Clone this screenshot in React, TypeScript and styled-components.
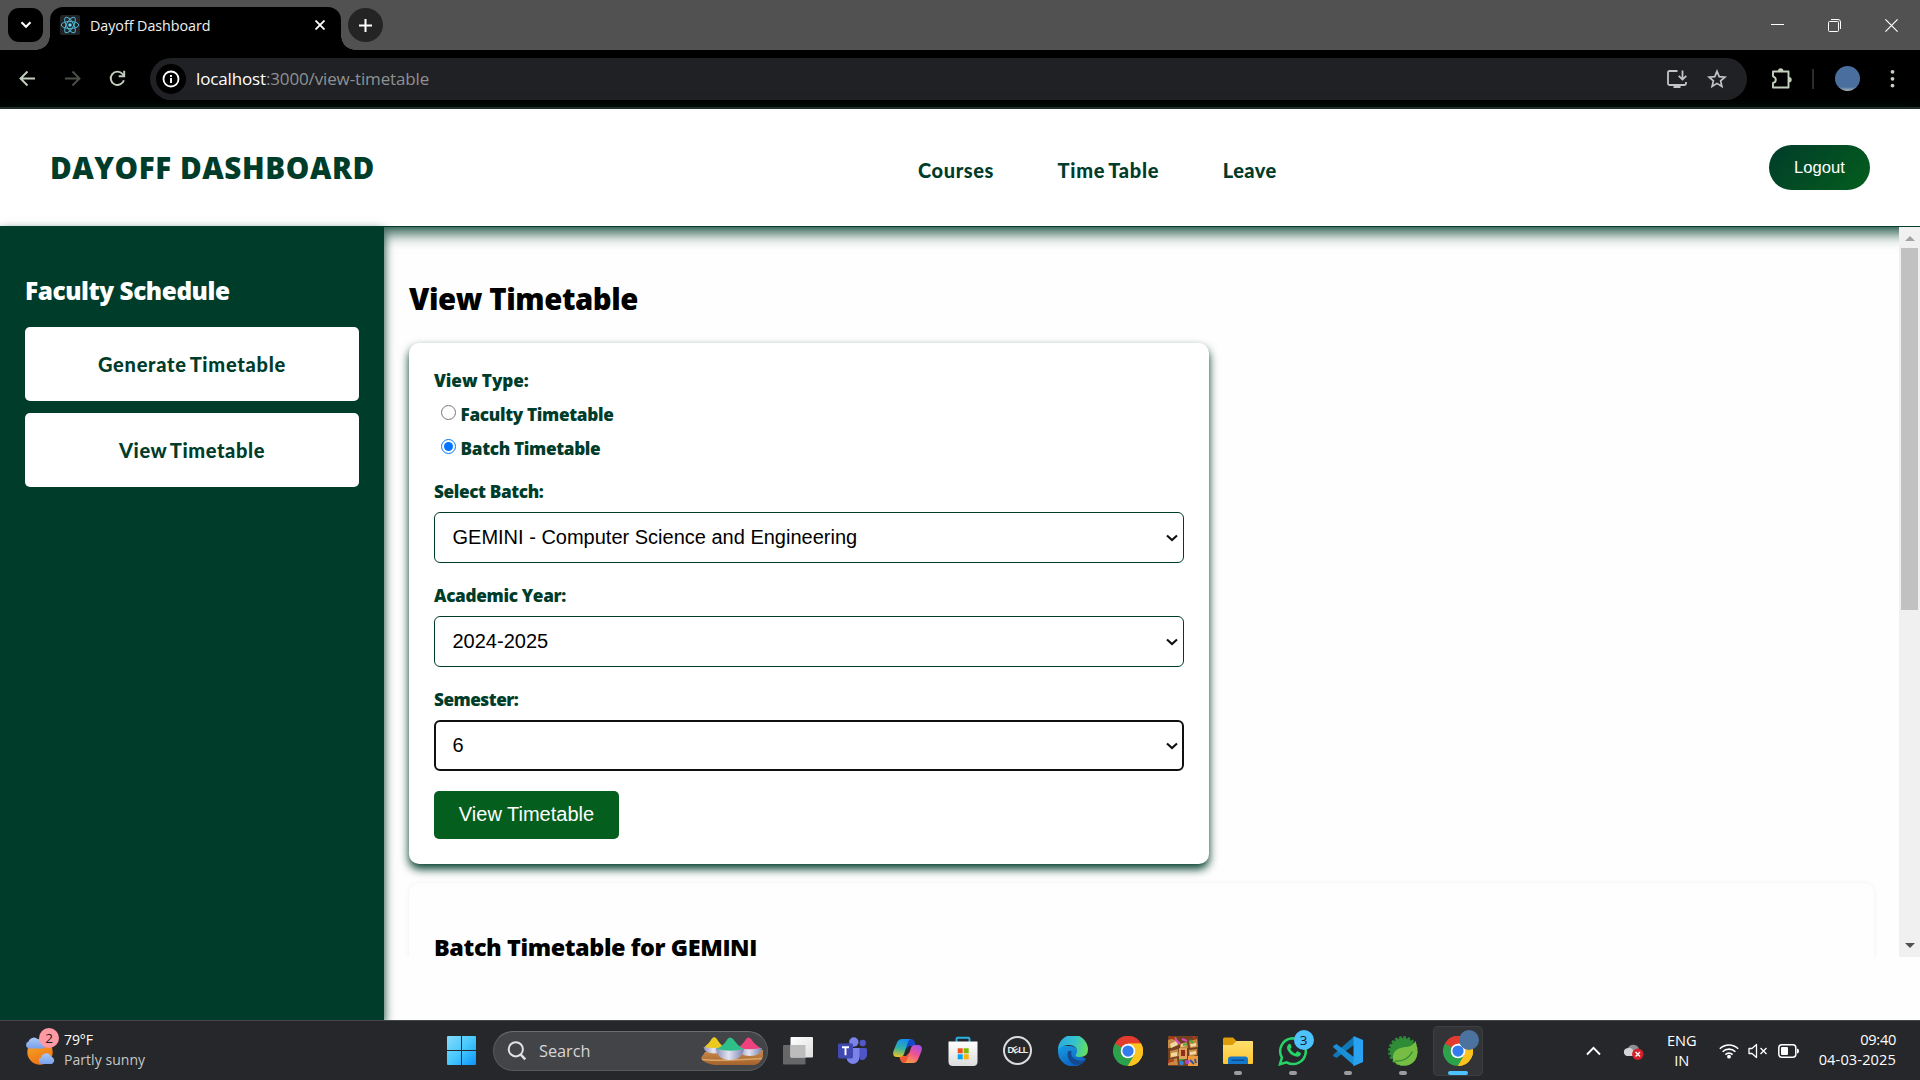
import React from 'react';
import styled, { createGlobalStyle } from 'styled-components';

const ui = '"Open Sans", "Noto Sans", sans-serif';
const arial = '"Liberation Sans", Arial, sans-serif';
const gill = 'Lato, sans-serif';
const green = '#003c2a';

const Global = createGlobalStyle`
  * { box-sizing: border-box; }
  body { margin: 0; background: #fefefe; overflow: hidden; }
  button { border: 0; padding: 0; margin: 0; background: none; }
  h1, h2, h3, p { margin: 0; }
  svg { display: block; flex: none; }
`;

const Screen = styled.div`
  width: 1920px; height: 1080px; display: flex; flex-direction: column;
  overflow: hidden; font-family: ${ui};
`;

/* ---------- browser chrome ---------- */
const TabStrip = styled.div`
  height: 50px; flex: none; background: #515151; display: flex; align-items: flex-start; padding-left: 8px;
`;
const TabMenu = styled.button`
  width: 35px; height: 34px; margin-top: 8px; border-radius: 11px; background: #000;
  display: flex; align-items: center; justify-content: center;
`;
const Tab = styled.div`
  position: relative; width: 291px; height: 43px; margin: 7px 7px 0 7px; padding: 0 16px 0 10px;
  border-radius: 13px 13px 0 0; background: #000; display: flex; align-items: center;
  &::before, &::after {
    content: ''; position: absolute; bottom: 0; width: 14px; height: 14px;
  }
  &::before { left: -14px; background: radial-gradient(circle at 0 0, transparent 13.5px, #000 14px); }
  &::after { right: -14px; background: radial-gradient(circle at 100% 0, transparent 13.5px, #000 14px); }
`;
const Favicon = styled.span`
  width: 20px; height: 20px; margin: -7px 10px 0 0; background: #222327; border-radius: 2px;
`;
const TabTitle = styled.span`
  flex: 1; margin-top: -6px; font-size: 14.3px; line-height: 20px; letter-spacing: -0.05px; color: #f0f0f0; white-space: nowrap;
`;
const TabClose = styled.span`margin-top: -7px;`;
const NewTab = styled.button`
  width: 35px; height: 34px; margin-top: 8px; border-radius: 50%; background: #242424;
  display: flex; align-items: center; justify-content: center;
`;
const WindowControls = styled.div`margin-left: auto; height: 50px; display: flex; align-items: center;`;
const WindowButton = styled.button<{ $last?: boolean }>`
  width: ${p => (p.$last ? 57 : 57)}px; height: 50px; display: flex; align-items: center; justify-content: center;
`;
const Toolbar = styled.div`
  height: 59px; flex: none; background: #000; border-bottom: 2px solid #2a2a2c;
  display: flex; align-items: center; padding: 0 10px 0 17px;
`;
const NavIcon = styled.button<{ $gap?: number }>`
  width: 21px; height: 21px; margin-right: ${p => p.$gap ?? 24}px;
`;
const Omnibox = styled.div`
  flex: none; width: 1597px; height: 42px; border-radius: 21px; background: #202124; padding: 0 19px 0 6px;
  margin-right: 24px; display: flex; align-items: center;
`;
const SiteInfo = styled.span`
  width: 30px; height: 30px; border-radius: 50%; background: #000; margin-right: 10px;
  display: flex; align-items: center; justify-content: center;
`;
const Url = styled.span`
  flex: 1; padding-top: 1px; font-size: 17px; line-height: 24px; letter-spacing: -0.14px; color: #8f9194;
  b { font-weight: 400; color: #fff; }
`;
const OmniIcons = styled.span`display: flex; gap: 18px;`;
const Divider = styled.span`width: 2px; height: 20px; background: #2c2c2c; margin: 0 21px 0 20px;`;
const Avatar = styled.span`
  width: 25px; height: 25px; border-radius: 50%; margin-right: 19px;
  background: linear-gradient(#4a6f9f 84%, #a6aeb4 98%);
`;

/* ---------- page ---------- */
const Header = styled.header`
  position: relative; z-index: 2; height: 118px; flex: none; background: #fff;
  border-bottom: 1px solid ${green}; box-shadow: 0 5px 15px ${green};
  display: flex; align-items: center; padding: 0 50px 0 50px;
`;
const Brand = styled.h1`
  width: 868px; font-weight: 800; font-size: 29.6px; line-height: 40px; letter-spacing: 0.57px; color: ${green};
  padding-top: 1px;
`;
const Nav = styled.nav`flex: 1; display: flex; gap: 63.5px; padding-top: 4px;`;
const NavLink = styled.a<{ $ls?: number }>`
  font: 900 20px/26px ${gill}; letter-spacing: ${p => p.$ls ?? 0.6}px; word-spacing: -2px;
  color: ${green}; white-space: nowrap;
`;
const Logout = styled.button`
  width: 101px; height: 45px; border-radius: 23px; color: #fff; font: 16.6px/19px ${arial};
  background: linear-gradient(135deg, ${green}, #045e1d);
`;
const Body = styled.div`flex: 1; min-height: 0; margin-top: -1px; display: flex;`;
const Sidebar = styled.aside`
  position: relative; z-index: 3; width: 384px; background: ${green}; box-shadow: 0 5px 10px ${green};
  padding: 47px 25px 0; display: flex; flex-direction: column;
`;
const SideTitle = styled.h2`
  font-weight: 800; font-size: 24.4px; line-height: 36px; letter-spacing: -0.45px; color: #fff; margin-bottom: 18px;
`;
const SideLink = styled.a<{ $ls: number }>`
  height: 74px; margin-bottom: 12px; border-radius: 5px; background: #fff; color: ${green};
  font: 900 20px/26px ${gill}; letter-spacing: ${p => p.$ls}px; word-spacing: -2px;
  display: flex; align-items: center; justify-content: center; padding-bottom: 1px;
`;
const Scroller = styled.div`
  flex: 1; height: 730px; margin-top: 1px; display: flex; background: #fefefe;
`;
const Main = styled.main`flex: 1; overflow: hidden; padding: 50px 25px 0;`;
const PageTitle = styled.h2`
  font-weight: 800; font-size: 29.3px; line-height: 44px; letter-spacing: -0.4px; color: #000; margin-bottom: 22px;
`;
const FormCard = styled.form`
  width: 800px; height: 521px; padding: 25px; border-radius: 10px; background: #fff;
  box-shadow: 0 5px 10px ${green}; display: flex; flex-direction: column; align-items: flex-start;
`;
const Label = styled.label<{ $ls?: number }>`
  font-weight: 800; font-size: 17.2px; line-height: 25px; letter-spacing: ${p => p.$ls ?? -0.4}px; color: ${green};
`;
const RadioGroup = styled.div`padding: 5px 0 13px 6.5px;`;
const RadioRow = styled.div`
  height: 34px; display: flex; align-items: center; gap: 5px;
  ${Label} { margin-top: -2px; }
`;
const Radio = styled.input`width: 15px; height: 15px; margin: -5px 0 0 0;`;
const SelectBox = styled.div<{ $focus?: boolean }>`
  width: 750px; height: 51px; margin: 8px 0 20px; border-radius: 6px; background: #fff; color: #000;
  border: ${p => (p.$focus ? '2px solid #101010' : `1px solid ${green}`)};
  padding: ${p => (p.$focus ? '0 4px 0 16.5px' : '0 5px 0 17.5px')};
  font: 20px/24px ${arial};
  display: flex; align-items: center; justify-content: space-between;
`;
const SelectText = styled.span`margin-top: -1px;`;
const Submit = styled.button`
  width: 185px; height: 48px; border-radius: 5px; background: #045e1d; color: #fff; font: 20px/24px ${arial};
  padding-bottom: 2px;
`;
const ResultCard = styled.section`
  height: 300px; margin-top: 19px; padding: 49px 25px; border-radius: 10px; background: #fefefe;
  box-shadow: 0 0 5px rgba(0, 0, 0, 0.06);
`;
const ResultTitle = styled.h3`
  font-weight: 800; font-size: 23.4px; line-height: 30px; letter-spacing: -0.4px; color: #000;
`;
const Scrollbar = styled.div`
  position: relative; z-index: 3; width: 21px; background: #f0f0f0; padding: 9px 2px;
  display: flex; flex-direction: column; align-items: center;
`;
const Thumb = styled.span`width: 17px; height: 362px; margin: 7px 0 auto; background: #c1c1c1;`;
const ScrollArrow = styled.i<{ $down?: boolean }>`
  width: 0; height: 0; border: 5px solid transparent;
  ${p => (p.$down ? 'border-top-color: #505050; border-bottom: 0;' : 'border-bottom-color: #a3a3a3; border-top: 0;')}
`;

/* ---------- taskbar ---------- */
const Taskbar = styled.footer`
  position: relative; z-index: 5; height: 60px; flex: none; background: #25272b; border-top: 1px solid #45484a;
  display: flex; align-items: center; color: #fff;
`;
const Weather = styled.div`
  position: relative; width: 447px; height: 59px; padding: 0 0 0 24px; display: flex; align-items: center; gap: 8px;
`;
const WeatherBadge = styled.span`
  position: absolute; left: 39px; top: 7px; width: 20px; height: 20px; border-radius: 50%; background: #ff99a4;
  color: #1b1b1b; font-size: 13.5px; line-height: 20px; text-align: center;
`;
const WeatherText = styled.div`
  font-size: 14px; line-height: 20px; letter-spacing: -0.1px; padding-bottom: 1px;
  p + p { color: #c5c6c8; letter-spacing: 0.05px; }
`;
const Search = styled.div`
  width: 275px; height: 40px; margin: 0 2px 0 17px; padding: 0 3px 0 13px; border-radius: 20px;
  background: #434447; border: 1px solid #58595c; border-top-color: #6c6d70;
  display: flex; align-items: center;
`;
const SearchText = styled.span`flex: 1; margin: 0 0 0 12px; font-size: 16.3px; line-height: 22px; color: #d6d6d7;`;
const AppSlot = styled.div<{ $active?: boolean }>`
  position: relative; width: 50px; height: 50px; margin: 0 2.5px; border-radius: 5px;
  display: flex; align-items: center; justify-content: center;
  ${p => p.$active && 'background: #323438; box-shadow: inset 0 0 0 1px #3d3f43;'}
`;
const Running = styled.i<{ $active?: boolean }>`
  position: absolute; bottom: 1px; left: 50%; transform: translateX(-50%); height: 4px; border-radius: 2px;
  width: ${p => (p.$active ? 20 : 8)}px; background: ${p => (p.$active ? '#4cc2ff' : '#9b9c9e')};
`;
const CountBadge = styled.span`
  position: absolute; left: 26px; top: 4px; width: 20px; height: 20px; border-radius: 50%; background: #4cc2ff;
  color: #1b1b1b; font-size: 13.5px; line-height: 20px; text-align: center;
`;
const ProfileBadge = styled.span`
  position: absolute; right: 4px; top: 4px; width: 20px; height: 20px; border-radius: 50%; background: #4c729f;
`;
const Tray = styled.div`
  margin-left: auto; padding-right: 24px; height: 59px; display: flex; align-items: center;
`;
const TrayIcon = styled.span<{ $right: number }>`margin-right: ${p => p.$right}px;`;
const TrayText = styled.div<{ $right?: number; $end?: boolean }>`
  font-size: 14.6px; line-height: 20px; padding-bottom: ${p => (p.$end ? 4 : 2)}px;
  letter-spacing: ${p => (p.$end ? 0.12 : 0)}px; margin-right: ${p => p.$right ?? 0}px;
  text-align: ${p => (p.$end ? 'right' : 'center')}; white-space: nowrap;
`;
const Clock = styled.span`letter-spacing: -0.3px;`;

const stroke = (color: string, w: number) => ({ fill: 'none', stroke: color, strokeWidth: w });

const SelectArrow = () => (
  <svg width="12" height="8" viewBox="0 0 12 8"><path d="M1 1.4 6 6l5-4.6" {...stroke('#101010', 2.1)} /></svg>
);

const ReactLogo = () => (
  <svg width="20" height="20" viewBox="0 0 20 20">
    <g {...stroke('#4fb6cf', 1)}>
      {[0, 60, 120].map(a => <ellipse key={a} cx="10" cy="10" rx="8.8" ry="3.5" transform={`rotate(${a} 10 10)`} />)}
    </g>
    <circle cx="10" cy="10" r="1.7" fill="#61dafb" />
  </svg>
);

const ChromeLogo = () => (
  <svg width="30" height="30" viewBox="0 0 48 48">
    <path d="M24 24 3.2 12A24 24 0 0 1 44.8 12Z" fill="#e33b2e" />
    <path d="M24 24 44.8 12A24 24 0 0 1 24 48Z" fill="#fcc31e" />
    <path d="M24 24 24 48A24 24 0 0 1 3.2 12Z" fill="#2ba24c" />
    <path d="M24 12H44.8L34.4 30Z" fill="#fcc31e" />
    <path d="M34.4 30 24 48 13.6 30Z" fill="#2ba24c" />
    <path d="M13.6 30 3.2 12 24 12Z" fill="#e33b2e" />
    <path d="M3.2 12 13.6 30 24 24Z" fill="#2ba24c" />
    <path d="M3.2 12 H44.8 A24 24 0 0 0 3.2 12Z" fill="#e33b2e" />
    <path d="M34.4 30 24 48A24 24 0 0 0 44.8 12H24Z" fill="#fcc31e" />
    <circle cx="24" cy="24" r="11.6" fill="#fff" />
    <circle cx="24" cy="24" r="9" fill="#327cf0" />
  </svg>
);

const WindowsLogo = () => (
  <svg width="29" height="29" viewBox="0 0 29 29">
    <defs>
      <linearGradient id="win" gradientUnits="userSpaceOnUse" x1="0" y1="0" x2="29" y2="29">
        <stop offset="0" stopColor="#85dcfb" /><stop offset=".5" stopColor="#47c8fc" /><stop offset="1" stopColor="#0c93fb" />
      </linearGradient>
    </defs>
    <path d="M0 1q0-1 1-1h13v14H0zM15 0h13q1 0 1 1v13H15zM0 15h14v14H1q-1 0-1-1zM15 15h14v13q0 1-1 1H15z" fill="url(#win)" />
  </svg>
);

const WeatherIcon = () => (
  <svg width="32" height="36" viewBox="0 0 32 36">
    <defs>
      <linearGradient id="sun" x1="0" y1="0" x2=".4" y2="1"><stop offset="0" stopColor="#f6b02c" /><stop offset="1" stopColor="#f07413" /></linearGradient>
      <linearGradient id="cl" x1="0" y1="0" x2="0" y2="1"><stop offset="0" stopColor="#a9c8f8" /><stop offset="1" stopColor="#7ba0ea" /></linearGradient>
    </defs>
    <circle cx="16" cy="19" r="12.7" fill="url(#sun)" />
    <path d="M4.500 15.500a3.700 3.700 0 0 1 0-7 6 6 0 0 1 10-2 5 5 0 0 1 5 9z" fill="url(#cl)" />
    <path d="M17 31a3.400 3.400 0 0 1 0-6.500 5.300 5.300 0 0 1 10-1 4 4 0 0 1 1 7.500z" fill="url(#cl)" />
  </svg>
);

const Bowls = () => (
  <svg width="64" height="30" viewBox="0 0 64 30">
    <defs>
      <linearGradient id="bowl"><stop offset="0" stopColor="#8d91b8" /><stop offset=".45" stopColor="#e3e4f2" /><stop offset="1" stopColor="#7e82ad" /></linearGradient>
      <linearGradient id="wood" x1="0" y1="0" x2="0" y2="1"><stop offset="0" stopColor="#c98a4c" /><stop offset="1" stopColor="#a3632b" /></linearGradient>
    </defs>
    <path d="M5 16 63 14v7q-3 7-9 8H14Q3 27 1 22z" fill="url(#wood)" />
    <path d="M2 23.5q14 2 60-1" {...stroke('#dba569', 1.4)} />
    <path d="M3.500 11h22q-1 6.500-11 6.500T3.500 11" fill="url(#bowl)" />
    <path d="M4.500 11q5-4 7.500-8.500 2-2.500 4.500 0Q19 7 23.500 11q-9 2-19 0" fill="#edc91d" />
    <path d="M38 12h24q-1 8-12 8t-12-8" fill="url(#bowl)" />
    <path d="M38 12q6-5 8-9 2.500-3 5 0 4 6 9.500 9-11 2.500-22.500 0" fill="#f0417f" />
    <path d="M16 12h28q-1 12-14 12T16 12" fill="url(#bowl)" />
    <path d="M16.500 13q8-4 11-10 2.500-3 5.500 0 4 6 10.500 10-13 3.500-27 0" fill="#2fc08a" />
  </svg>
);

const TaskView = () => (
  <svg width="30" height="28" viewBox="0 0 30 28">
    <defs><linearGradient id="tv" x1="0" y1="0" x2="1" y2="1"><stop offset="0" stopColor="#fff" /><stop offset="1" stopColor="#dedede" /></linearGradient></defs>
    <rect x="0" y="8" width="22.500" height="19.500" rx="1" fill="#666769" />
    <rect x="7.500" y="0" width="22.500" height="20.500" rx="1" fill="url(#tv)" />
    <path d="M7.500 8h15v12.500h-14q-1 0-1-1z" fill="#bcbcbc" />
  </svg>
);

const Teams = () => (
  <svg width="30" height="28" viewBox="0 0 30 28">
    <circle cx="24.700" cy="6" r="3.200" fill="#5159c9" />
    <path d="M20 11h7.500q1.500 0 1.500 1.500V18a5 5 0 0 1-7 4.600z" fill="#4e55c4" />
    <circle cx="15.800" cy="5" r="4.700" fill="#7b83eb" />
    <path d="M9 11h12.500v9a6.500 7 0 0 1-13 0z" fill="#7b83eb" />
    <rect x="0" y="6.500" width="15" height="15" rx="1.400" fill="#4048b1" />
    <path d="M4 10.200h7M7.500 10.200v8" {...stroke('#fff', 1.900)} />
  </svg>
);

const Copilot = () => (
  <svg width="29" height="26" viewBox="0 0 29 26">
    <defs>
      <linearGradient id="cpa" x1=".4" y1="0" x2=".2" y2="1"><stop offset="0" stopColor="#1690ee" /><stop offset=".5" stopColor="#31b1a2" /><stop offset="1" stopColor="#f0c61e" /></linearGradient>
      <linearGradient id="cpb" x1=".8" y1="0" x2=".3" y2="1"><stop offset="0" stopColor="#a34fea" /><stop offset=".5" stopColor="#ef5392" /><stop offset="1" stopColor="#fb9a45" /></linearGradient>
    </defs>
    <path d="M14 1h4q3 0 4 4l1 3h-7l-4 4z" fill="#1649c9" />
    <path d="M15 25h-4q-3 0-4-4l-1-3h7l4-4z" fill="#ee5a35" />
    <path d="M9 1h9q-2 0-3 3l-4 12q-1 3-4 3H4q-5 0-3.500-6L4 4.500Q5.500 1 9 1z" fill="url(#cpa)" />
    <path d="M20 25h-9q2 0 3-3l4-12q1-3 4-3h3q5 0 3.500 6L25 21.500q-1.500 3.500-5 3.500z" fill="url(#cpb)" />
  </svg>
);

const Store = () => (
  <svg width="30" height="30" viewBox="0 0 30 30">
    <defs><linearGradient id="st" x1="0" y1="0" x2="0" y2="1"><stop offset="0" stopColor="#fff" /><stop offset="1" stopColor="#dcdcdc" /></linearGradient></defs>
    <path d="M8.500 6.500V3q0-1.200 1.200-1.200h10.600q1.200 0 1.200 1.200v3.500" {...stroke('#2bb2e8', 1.900)} />
    <path d="M.5 5.500h29v20q0 4.500-4.500 4.500H5Q.5 30 .5 25.500z" fill="url(#st)" />
    <path d="M9.700 12.300h5v5h-5z" fill="#f1511b" /><path d="M15.700 12.300h5v5h-5z" fill="#80b900" />
    <path d="M9.700 18.300h5v5h-5z" fill="#00a3ee" /><path d="M15.700 18.300h5v5h-5z" fill="#fbb00a" />
  </svg>
);

const DellMark = styled.span`
  width: 29px; height: 29px; border: 2px solid #dcdcdc; border-radius: 50%; color: #ececec;
  font: 700 9px/25px ${arial}; letter-spacing: -0.9px; text-align: center; white-space: nowrap; margin-top: -1px;
  i { display: inline-block; font-style: normal; transform: rotate(-28deg); }
`;

const Edge = () => (
  <svg width="30" height="30" viewBox="0 0 30 30">
    <defs>
      <linearGradient id="ea" x1="0" y1=".2" x2="1" y2=".4"><stop offset="0" stopColor="#2aa9e0" /><stop offset=".55" stopColor="#34c3cf" /><stop offset="1" stopColor="#62dd63" /></linearGradient>
      <linearGradient id="eb" x1="0" y1="0" x2=".5" y2="1"><stop offset="0" stopColor="#1a9de4" /><stop offset="1" stopColor="#0c63c0" /></linearGradient>
    </defs>
    <path d="M0 15C0 7 6 10 12 10q8 0 8 8 4 3 8 5A15 15 0 0 1 0 15z" fill="url(#eb)" />
    <path d="M9.500 17q0 8 6 11.500 8 2 12.700-5-7 3.500-13-1.500-3-3-1.500-7-4-1-4.200 2z" fill="#15498f" />
    <path d="M0 14A15 15 0 0 1 30 13.500q0 7.500-8 7.500-4.500 0-4.500-2 1.500-1.500 1.500-3.500 0-6.500-8-6.500Q3 9 0 14z" fill="url(#ea)" />
  </svg>
);

const GameTile = () => (
  <svg width="30" height="30" viewBox="0 0 30 30">
    <rect width="30" height="30" fill="#71401f" />
    <path d="M0 4 8 1l3 7-8 4-3 0zM12 8l7-2 1 6-8 1zM21 5l8-2 1 8-8 1zM2 15l8-2 1 7-9 2zM21 14l8-1v6l-8 2zM1 24l8-2 1 7H0z" fill="#c68a45" />
    <path d="M2 8l6-3 2 4-7 3zM13 8l5-1v3l-5 1zM22 8l6-1v3l-5 1zM3 17l6-1v4l-6 1zM22 16l6-1v3l-6 1z" fill="#f0d69f" />
    <path d="M7 3l5 5M14 3l5 2" {...stroke('#d84ac4', 2.2)} />
    <path d="M15 9l4-1M22 4l3 3M11 24l7-2" {...stroke('#4aa63c', 2)} />
    <path d="M11 12h8v11h-8z" fill="#e2a15a" /><path d="M13 14h4v6h-4z" fill="#8d2e1c" />
    <path d="M20 20h10v10H20z" fill="#ef9a3a" /><circle cx="13.500" cy="27" r="2.300" fill="#3487d8" />
    <circle cx="19" cy="26" r="2.200" fill="#a844cf" /><path d="M22 24l4 4M27 23l1 4" {...stroke('#2d54a6', 1.800)} />
    <path d="M1 1l6 2M24 0l4 3M0 26l6-2" {...stroke('#b6351f', 2)} />
  </svg>
);

const Folder = () => (
  <svg width="30" height="28" viewBox="0 0 30 28">
    <defs><linearGradient id="fo" x1="0" y1="0" x2="0" y2="1"><stop offset="0" stopColor="#ffdf70" /><stop offset="1" stopColor="#fdc52f" /></linearGradient></defs>
    <path d="M0 2q0-1.500 1.500-1.500H10L13.500 4H28q2 0 2 2v4H0z" fill="#dd9c09" />
    <path d="M0 8h9.500L13.500 4H29q1 0 1 1v21q0 1-1 1H1q-1 0-1-1z" fill="url(#fo)" />
    <path d="M5 27v-4.500q0-3 3-3h14q3 0 3 3V27z" fill="#1577c9" /><path d="M8.500 23.200h13" {...stroke('#0b4c91', 1.400)} />
  </svg>
);

const WhatsApp = () => (
  <svg width="30" height="30" viewBox="0 0 30 30">
    <path d="M2 28.200l1.900-6.600A12.800 12.800 0 1 1 8.600 26.300z" {...stroke('#27d366', 2.500)} />
    <path d="M10.600 8.200c.9-.9 1.700-.5 2 .3l.9 2.100c.2.600-.1 1.200-1.200 2.400 1.300 2.300 3 3.700 5 4.500l1.500-1.800c.4-.5.900-.4 1.400-.2l2.300 1.200c.7.500.3 2-.6 3-1.500 1.500-4.100 1.300-6.800-.1-3.300-1.800-5.400-4.900-5.900-6.700-.5-1.900.3-3.700 1.400-4.700z" fill="#27d366" />
  </svg>
);

const VSCode = () => (
  <svg width="30" height="30" viewBox="0 0 30 30">
    <path d="M21.500 0v8.500L3.500 22 .5 20.200q-.8-.9 0-1.800z" fill="#1178b8" />
    <path d="M21.500 30v-8.500L3.500 8 .5 9.800q-.8.900 0 1.800z" fill="#1a8fd8" />
    <path d="M21 .3 30 4v22l-9 4q-1-.2-.5-1.500V1.500Q20.400.5 21 .3z" fill="#29a3f1" />
  </svg>
);

const SpringIcon = () => (
  <svg width="30" height="30" viewBox="0 0 30 30">
    <circle cx="15" cy="15" r="13.600" {...stroke('#2f8c36', 2.600)} strokeDasharray="2.700 1.570" />
    <circle cx="15" cy="15" r="13" fill="#2f8c36" />
    <path d="M27.500 5q6 19-6.500 24-10 2.500-15.500-4-2.500-9 5.500-12.500 4-1.500 9-1.800 4.500-.700 7.500-5.700z" fill="#76bd43" />
    <path d="M7 25q12 1 17.500-9.500" {...stroke('#2f8c36', 1.300)} />
  </svg>
);

const SearchGlass = () => (
  <svg width="20" height="20" viewBox="0 0 20 20">
    <circle cx="8.800" cy="8.300" r="7.100" {...stroke('#e2e2e2', 2)} /><path d="M13.500 13.300 18.300 18.300" {...stroke('#e2e2e2', 2.400)} />
  </svg>
);

const taskApps: { icon: React.ReactNode; run?: boolean; active?: boolean; badge?: React.ReactNode }[] = [
  { icon: <TaskView /> },
  { icon: <Teams /> },
  { icon: <Copilot /> },
  { icon: <Store /> },
  { icon: <DellMark>D<i>E</i>LL</DellMark> },
  { icon: <Edge /> },
  { icon: <ChromeLogo /> },
  { icon: <GameTile /> },
  { icon: <Folder />, run: true },
  { icon: <WhatsApp />, run: true, badge: <CountBadge>3</CountBadge> },
  { icon: <VSCode />, run: true },
  { icon: <SpringIcon />, run: true },
  { icon: <ChromeLogo />, run: true, active: true, badge: <ProfileBadge /> },
];

const fields = [
  { label: 'Select Batch:', ls: -0.38, value: 'GEMINI - Computer Science and Engineering' },
  { label: 'Academic Year:', ls: -0.32, value: '2024-2025' },
  { label: 'Semester:', ls: -0.5, value: '6', focus: true },
];

export default function App() {
  return (
    <Screen>
      <Global />
      <TabStrip>
        <TabMenu>
          <svg width="12" height="8" viewBox="0 0 12 8"><path d="M1.500 1.200 6 5.700l4.500-4.500" {...stroke('#fff', 2.100)} /></svg>
        </TabMenu>
        <Tab>
          <Favicon><ReactLogo /></Favicon>
          <TabTitle>Dayoff Dashboard</TabTitle>
          <TabClose>
            <svg width="10" height="10" viewBox="0 0 10 10"><path d="M.5.5l9 9M9.500.5l-9 9" {...stroke('#fff', 1.800)} /></svg>
          </TabClose>
        </Tab>
        <NewTab>
          <svg width="13" height="13" viewBox="0 0 13 13"><path d="M6.500 0v13M0 6.500h13" {...stroke('#fff', 2)} /></svg>
        </NewTab>
        <WindowControls>
          <WindowButton><svg width="13" height="13" viewBox="0 0 13 13"><path d="M0 5.500h13" {...stroke('#fff', 1)} /></svg></WindowButton>
          <WindowButton>
            <svg width="13" height="13" viewBox="0 0 13 13">
              <rect x=".5" y="2.500" width="10" height="10" rx="1" {...stroke('#fff', 1)} />
              <path d="M3 .5h7q2.500 0 2.500 2.500v7" {...stroke('#fff', 1)} />
            </svg>
          </WindowButton>
          <WindowButton $last><svg width="13" height="13" viewBox="0 0 13 13"><path d="M.4.400l12.200 12.200M12.600.400.4 12.600" {...stroke('#fff', 1.200)} /></svg></WindowButton>
        </WindowControls>
      </TabStrip>
      <Toolbar>
        <NavIcon><svg width="21" height="21" viewBox="0 0 21 21"><path d="M18 10.500H4M10.500 3.500l-7 7 7 7" {...stroke('#c4d0be', 1.900)} /></svg></NavIcon>
        <NavIcon><svg width="21" height="21" viewBox="0 0 21 21"><path d="M3 10.500h14M10.500 3.500l7 7-7 7" {...stroke('#4c5048', 1.900)} /></svg></NavIcon>
        <NavIcon $gap={22}>
          <svg width="21" height="21" viewBox="0 0 21 21">
            <path d="M16.900 12.200A6.700 6.700 0 1 1 15.600 6l1.400 1.600" {...stroke('#c4d0be', 1.900)} />
            <path d="M17.200 2.800v5.500h-5.500" {...stroke('#c4d0be', 1.900)} />
          </svg>
        </NavIcon>
        <Omnibox>
          <SiteInfo>
            <svg width="18" height="18" viewBox="0 0 18 18">
              <circle cx="9" cy="9" r="7.500" {...stroke('#fff', 1.800)} /><path d="M9 8v5M9 5v1.900" {...stroke('#fff', 1.900)} />
            </svg>
          </SiteInfo>
          <Url><b>localhost</b>:3000/view-timetable</Url>
          <OmniIcons>
            <svg width="22" height="22" viewBox="0 0 22 22">
              <path d="M11.500 3H3.500q-1.500 0-1.500 1.500v11Q2 17 3.500 17h15q1.500 0 1.500-1.500V14" {...stroke('#c3c4c6', 1.800)} />
              <path d="M7.500 17h7v3h-7z" fill="#c3c4c6" /><path d="M16.500 2.500v8.500M12.700 7.800l3.800 3.800 3.800-3.800" {...stroke('#c3c4c6', 1.800)} />
            </svg>
            <svg width="22" height="22" viewBox="0 0 22 22">
              <path d="M11 3.300l2.200 5.300 5.700.5-4.300 3.700 1.300 5.600-4.900-3-4.900 3 1.300-5.600L3.100 9.100l5.700-.5z" {...stroke('#c3c4c6', 1.700)} />
            </svg>
          </OmniIcons>
        </Omnibox>
        <svg width="21" height="21" viewBox="0 0 21 21">
          <path d="M2 3.500h15.500v16H2V15q2.800-.800 2.800-3.300T2 8.300z" {...stroke('#c4d0be', 1.900)} strokeLinejoin="round" />
          <path d="M7 3a2.700 2.700 0 0 1 5.400 0zM18 9a2.700 2.700 0 0 1 0 5.400z" fill="#c4d0be" />
        </svg>
        <Divider />
        <Avatar />
        <svg width="26" height="22" viewBox="0 0 26 22">
          <g fill="#c4d0be"><circle cx="13.500" cy="3.800" r="1.900" /><circle cx="13.500" cy="10.800" r="1.900" /><circle cx="13.500" cy="17.600" r="1.900" /></g>
        </svg>
      </Toolbar>

      <Header>
        <Brand>DAYOFF DASHBOARD</Brand>
        <Nav>
          <NavLink>Courses</NavLink>
          <NavLink $ls={0.75}>Time Table</NavLink>
          <NavLink $ls={0.4}>Leave</NavLink>
        </Nav>
        <Logout>Logout</Logout>
      </Header>
      <Body>
        <Sidebar>
          <SideTitle>Faculty Schedule</SideTitle>
          <SideLink $ls={0.74}>Generate Timetable</SideLink>
          <SideLink $ls={0.62}>View Timetable</SideLink>
        </Sidebar>
        <Scroller>
          <Main>
            <PageTitle>View Timetable</PageTitle>
            <FormCard>
              <Label $ls={-0.08}>View Type:</Label>
              <RadioGroup>
                <RadioRow><Radio type="radio" name="type" readOnly checked={false} /><Label $ls={-0.33}>Faculty Timetable</Label></RadioRow>
                <RadioRow><Radio type="radio" name="type" readOnly checked /><Label $ls={-0.33}>Batch Timetable</Label></RadioRow>
              </RadioGroup>
              {fields.map(f => (
                <React.Fragment key={f.label}>
                  <Label $ls={f.ls}>{f.label}</Label>
                  <SelectBox $focus={f.focus}><SelectText>{f.value}</SelectText><SelectArrow /></SelectBox>
                </React.Fragment>
              ))}
              <Submit type="button">View Timetable</Submit>
            </FormCard>
            <ResultCard><ResultTitle>Batch Timetable for GEMINI</ResultTitle></ResultCard>
          </Main>
          <Scrollbar>
            <ScrollArrow />
            <Thumb />
            <ScrollArrow $down />
          </Scrollbar>
        </Scroller>
      </Body>

      <Taskbar>
        <Weather>
          <WeatherIcon />
          <WeatherBadge>2</WeatherBadge>
          <WeatherText><p>79°F</p><p>Partly sunny</p></WeatherText>
        </Weather>
        <WindowsLogo />
        <Search><SearchGlass /><SearchText>Search</SearchText><Bowls /></Search>
        {taskApps.map((a, i) => (
          <AppSlot key={i} $active={a.active}>
            {a.icon}
            {a.badge}
            {a.run && <Running $active={a.active} />}
          </AppSlot>
        ))}
        <Tray>
          <TrayIcon $right={22}><svg width="15" height="10" viewBox="0 0 15 10"><path d="M1 8.500l6.500-6.700L14 8.500" {...stroke('#fff', 1.900)} /></svg></TrayIcon>
          <TrayIcon $right={23}>
            <svg width="21" height="20" viewBox="0 0 21 20">
              <path d="M5 7a6 6 0 0 1 11 1v7H7z" fill="#8d8f92" /><path d="M4 15a4 4 0 0 1 0-7.800q4-1.500 7 2.800v5z" fill="#d4d5d6" />
              <circle cx="14.800" cy="13.300" r="5.700" fill="#d71f2b" /><path d="M12.600 11.100l4.400 4.400M17 11.100l-4.400 4.400" {...stroke('#fff', 1.400)} />
            </svg>
          </TrayIcon>
          <TrayText $right={22}>ENG<br />IN</TrayText>
          <TrayIcon $right={9}>
            <svg width="20" height="16" viewBox="0 0 20 16">
              <path d="M.8 5.800a13 13 0 0 1 18.400 0M3.600 8.800a9 9 0 0 1 12.800 0M6.400 11.600a5.100 5.100 0 0 1 7.200 0" {...stroke('#fff', 1.600)} />
              <circle cx="10" cy="13.700" r="1.900" fill="#fff" />
            </svg>
          </TrayIcon>
          <TrayIcon $right={10}>
            <svg width="20" height="16" viewBox="0 0 20 16">
              <path d="M1 5.500h3L8.500 1.500v13L4 10.500H1z" {...stroke('#fff', 1.300)} strokeLinejoin="round" />
              <path d="M12.500 5l6 6M18.500 5l-6 6" {...stroke('#fff', 1.300)} />
            </svg>
          </TrayIcon>
          <TrayIcon $right={20}>
            <svg width="21" height="14" viewBox="0 0 21 14">
              <rect x=".8" y=".8" width="17" height="12.400" rx="3" {...stroke('#fff', 1.500)} />
              <rect x="3" y="3" width="7" height="8" rx="1" fill="#fff" /><path d="M19 4.500q2 0 2 2.500t-2 2.500z" fill="#fff" />
            </svg>
          </TrayIcon>
          <TrayText $end><Clock>09:40</Clock><br />04-03-2025</TrayText>
        </Tray>
      </Taskbar>
    </Screen>
  );
}
